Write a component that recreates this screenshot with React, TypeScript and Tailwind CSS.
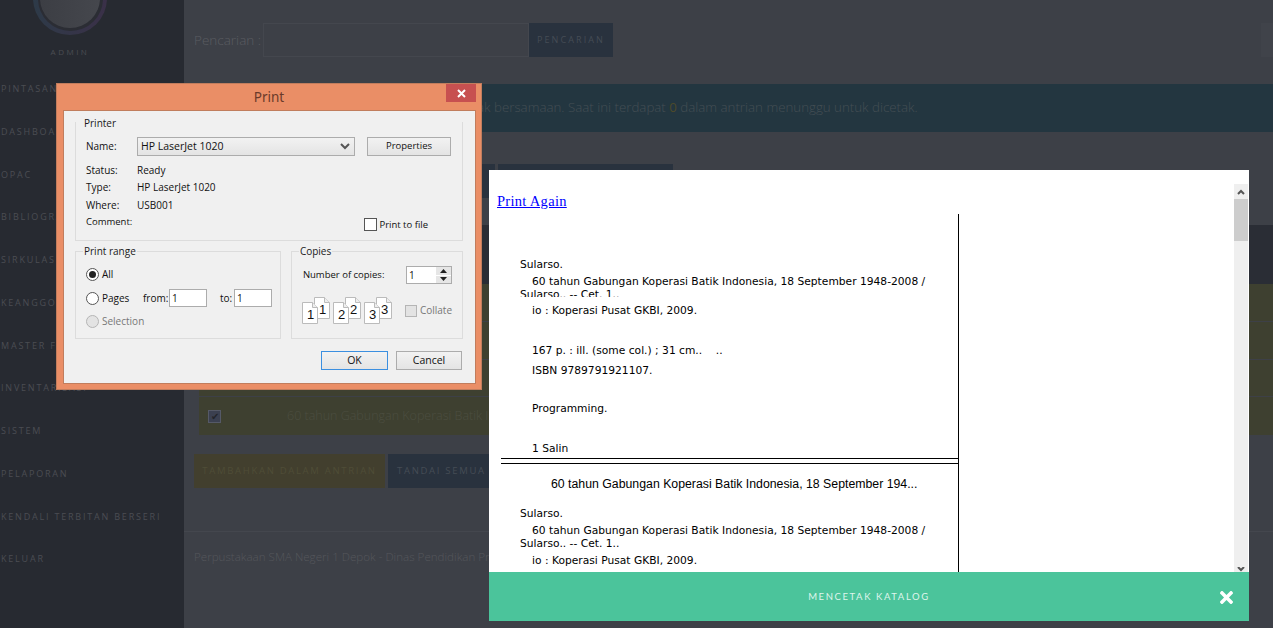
import React from "react";
import { FaTimes } from "react-icons/fa";

const menu = ["PINTASAN","DASHBOARD","OPAC","BIBLIOGRAFI","SIRKULASI","KEANGGOTAAN","MASTER FILE","INVENTARISASI","SISTEM","PELAPORAN","KENDALI TERBITAN BERSERI","KELUAR"];

function Sidebar() {
  return (
    <aside className="w-[184px] shrink-0 bg-[#272a31] flex flex-col items-stretch overflow-hidden">
      <div className="flex justify-center pr-[44px] -mt-[39px]">
        <div className="w-[74px] h-[74px] rounded-full bg-gradient-to-r from-[#2d3a48] to-[#3a3048] flex items-center justify-center">
          <div className="w-[65px] h-[65px] rounded-full bg-[#2b2d34] flex items-center justify-center">
            <div className="w-[60px] h-[60px] rounded-full bg-gradient-to-r from-[#3c3e44] to-[#45474d]" />
          </div>
        </div>
      </div>
      <div className="pr-[44px] mt-[12px] text-center text-[8px] leading-[10px] tracking-[2.5px] text-[#4b4d52]">ADMIN</div>
      <nav className="mt-[22px] flex flex-col pl-[1px]">
        {menu.map((m) => (
          <div key={m} className="h-[42.75px] leading-[20px] text-[9px] tracking-[1.8px] whitespace-nowrap text-[#4b4d53]">{m}</div>
        ))}
      </nav>
    </aside>
  );
}

function Main() {
  return (
    <main className="flex-1 min-w-0 bg-[#3d4047] flex flex-col overflow-hidden">
      <div className="flex items-center h-[34px] mt-[23px] pl-[10px]">
        <span className="w-[69px] text-[13.5px] font-light text-[#5a5c61] whitespace-nowrap">Pencarian :</span>
        <div className="w-[266px] h-full border border-[#44474e]" />
        <div className="w-[84px] h-full bg-[#29323e] text-[9px] tracking-[2.1px] text-[#454c55] flex items-center justify-center">PENCARIAN</div>
        <div className="ml-auto w-[12px] h-full bg-[#40434a]" />
      </div>
      <div className="mt-[27px] h-[48px] bg-[#233640] flex items-center pl-[275px] text-[13.3px] font-light text-[#434e54] whitespace-nowrap">
        <span>cetak bersamaan. Saat ini terdapat <b className="text-[#4d4a2a]">0</b> dalam antrian menunggu untuk dicetak.</span>
      </div>
      <div className="mt-[32px] h-[34px] flex pl-[10px] gap-[3px]">
        <div className="w-[301px] bg-[#29323e]" />
        <div className="w-[175px] bg-[#29323e]" />
      </div>
      <div className="mt-[27px] h-[59px] bg-[#2a2d35]" />
      <div className="ml-[15px] flex flex-col gap-px">
        <div className="h-[37px] bg-[#3e4030]" />
        <div className="h-[37px] bg-[#3e4030]" />
        <div className="h-[36px] bg-[#3e4030]" />
        <div className="h-[38px] bg-[#3e4030] flex items-center pl-[9px]">
          <div className="w-[13px] h-[13px] bg-[#3b4050] border border-[#555967] flex items-center justify-center text-[10px] text-[#23252b]">✔</div>
          <span className="ml-[66px] text-[12.5px] font-light text-[#4c4e40] whitespace-nowrap">60 tahun Gabungan Koperasi Batik Indonesia, 18 September 1948-2008</span>
        </div>
      </div>
      <div className="mt-[19px] h-[34px] flex pl-[10px] gap-[3px] text-[9.5px] tracking-[1.7px] items-stretch whitespace-nowrap">
        <div className="w-[191px] bg-[#423f2e] text-[#4f4d37] flex items-center justify-center">TAMBAHKAN DALAM ANTRIAN</div>
        <div className="w-[200px] bg-[#29323e] text-[#454c55] flex items-center pl-[9px]">TANDAI SEMUA</div>
      </div>
      <div className="mt-[43px] border-t border-[#44474e] pt-[16px] pl-[10px] text-[11.6px] font-light text-[#55575c] whitespace-nowrap">
        Perpustakaan SMA Negeri 1 Depok - Dinas Pendidikan Provinsi Jawa Barat
      </div>
    </main>
  );
}

function Group({ title, className, legend, children }: { title: string; className: string; legend: string; children: React.ReactNode }) {
  return (
    <fieldset className={`border border-[#dcdcdc] ${className}`}>
      <legend className={`px-[1px] text-[10px] leading-[12px] text-[#1a1a1a] ${legend}`}>{title}</legend>
      {children}
    </fieldset>
  );
}

function Btn({ children, className = "" }: { children: React.ReactNode; className?: string }) {
  return (
    <div className={`h-[19px] bg-gradient-to-b from-[#f2f2f2] to-[#e4e4e4] border flex items-center justify-center text-[10.5px] text-[#111] ${className}`}>{children}</div>
  );
}

function Radio({ on, off, label }: { on?: boolean; off?: boolean; label: string }) {
  return (
    <div className="flex items-center gap-[3px]">
      <div className={`w-[13px] h-[13px] rounded-full border flex items-center justify-center ${off ? "border-[#b5b5b5] bg-[#e3e3e3]" : "border-[#555] bg-white"}`}>
        {on && <div className="w-[7px] h-[7px] rounded-full bg-[#222]" />}
      </div>
      <span className={off ? "text-[#777]" : "text-[#111]"}>{label}</span>
    </div>
  );
}

function CopyPages({ n }: { n: number }) {
  const page = (x: number, y: number) => (
    <g>
      <path d={`M${x} ${y}h10l5 5v16h-15z`} fill="#fff" stroke="#bbb" />
      <path d={`M${x + 10} ${y}v5h5`} fill="#eee" stroke="#bbb" />
      <text x={x + 8} y={y + 16} fontSize="13" textAnchor="middle" fill="#111" fontFamily="Liberation Sans, sans-serif">{n}</text>
    </g>
  );
  return (
    <svg width="29" height="27" viewBox="0 0 29 27">
      {page(12.5, 0.5)}
      {page(0.5, 5.5)}
    </svg>
  );
}

function PrintDialog() {
  return (
    <section className="absolute left-[56px] top-[83px] w-[426px] h-[307px] bg-[#ea8e66] border border-[#c17d5d] flex flex-col font-['Open_Sans',sans-serif]">
      <div className="relative h-[26px] shrink-0 flex items-center justify-center text-[13.5px] text-[#6a3a2a] font-['Noto_Sans',sans-serif]">
        Print
        <div className="absolute right-[5px] top-0 w-[30px] h-[18px] bg-[#c75050] flex items-center justify-center text-white">
          <svg width="9" height="9" viewBox="0 0 9 9"><path d="M1 1l7 7M8 1l-7 7" stroke="#fff" strokeWidth="2" /></svg>
        </div>
      </div>
      <div className="mx-[5.5px] mb-[5px] flex-1 bg-[#f0f0f0] border border-[#c17d5d] px-[11.5px] pt-[6px] flex flex-col text-[10px] text-[#111]">
        <div className="h-[124px] w-[388px] border-x border-b border-[#dcdcdc] pl-[10px] pr-[11px] relative">
          <div className="absolute -left-px -top-px w-[calc(100%+2px)] h-[6px] bg-[#f0f0f0]" />
          <div className="relative -ml-[2px] text-[10px] leading-[12px] text-[#1a1a1a]">Printer</div>
          <div className="flex mt-[8px] items-center relative">
            <span className="w-[51px]">Name:</span>
            <div className="w-[218px] h-[19px] bg-gradient-to-b from-[#f2f2f2] to-[#e4e4e4] border border-[#acacac] flex items-center justify-between pl-[3px] pr-[4px] text-[10.5px]">
              HP LaserJet 1020
              <svg width="10" height="7" viewBox="0 0 10 7"><path d="M1 1l4 4 4-4" fill="none" stroke="#555" strokeWidth="2" /></svg>
            </div>
            <Btn className="ml-[12px] w-[84px] border-[#acacac] !text-[9.5px]">Properties</Btn>
          </div>
          <div className="mt-[5px] grid grid-cols-[51px_1fr] auto-rows-[17.5px] items-center leading-[12px]">
            <span>Status:</span><span>Ready</span>
            <span>Type:</span><span>HP LaserJet 1020</span>
            <span>Where:</span><span>USB001</span>
            <span className="text-[9.5px]">Comment:</span>
            <span className="flex items-center justify-end pr-[23px] pt-[5px] text-[9.5px]">
              <span className="w-[13px] h-[13px] bg-white border border-[#555] mr-[2px]" />Print to file
            </span>
          </div>
        </div>
        <div className="flex mt-[4px] gap-[10px]">
          <Group title="Print range" legend="-ml-[3px]" className="w-[207px] h-[94px] pl-[10px]">
            <div className="flex flex-col gap-[7px] mt-[10px]">
              <Radio on label="All" />
              <div className="flex items-center">
                <div className="w-[53px]"><Radio label="Pages" /></div>
                <span className="ml-[4px] w-[26px]">from:</span>
                <div className="w-[38px] h-[18px] bg-white border border-[#acacac] pl-[2px] leading-[16px]">1</div>
                <span className="ml-[13px] w-[14px]">to:</span>
                <div className="w-[38px] h-[18px] bg-white border border-[#acacac] pl-[2px] leading-[16px]">1</div>
              </div>
              <Radio off label="Selection" />
            </div>
          </Group>
          <Group title="Copies" legend="-ml-[4px]" className="w-[171px] h-[94px] pl-[11px] pr-[10px]">
            <div className="flex items-center justify-between mt-[9px]">
              <span className="text-[9.5px]">Number of copies:</span>
              <div className="w-[46px] h-[18px] bg-white border border-[#acacac] flex justify-between pl-[2px]">
                <span className="leading-[16px]">1</span>
                <div className="w-[15px] flex flex-col gap-px bg-white">
                  <div className="flex-1 bg-[#e6e6e6] flex items-center justify-center"><svg width="7" height="4" viewBox="0 0 7 4"><path d="M3.5 0l3.5 4h-7z" fill="#222" /></svg></div>
                  <div className="flex-1 bg-[#e6e6e6] flex items-center justify-center"><svg width="7" height="4" viewBox="0 0 7 4"><path d="M3.5 4l3.5-4h-7z" fill="#222" /></svg></div>
                </div>
              </div>
            </div>
            <div className="flex items-center mt-[13px] -ml-[1px]">
              <div className="flex gap-[2px]"><CopyPages n={1} /><CopyPages n={2} /><CopyPages n={3} /></div>
              <span className="ml-[12px] w-[12px] h-[12px] border border-[#b5b5b5] bg-[#e3e3e3]" />
              <span className="ml-[3px] text-[#777]">Collate</span>
            </div>
          </Group>
        </div>
        <div className="flex justify-end gap-[8px] mt-[12px] pr-[1px]">
          <Btn className="w-[67px] border-[#3b8fe0]">OK</Btn>
          <Btn className="w-[66px] border-[#acacac]">Cancel</Btn>
        </div>
      </div>
    </section>
  );
}

function Line({ h, pl = 31, clip, children }: { h: number; pl?: number; clip?: boolean; children: React.ReactNode }) {
  return (
    <div className={`whitespace-nowrap ${clip ? "overflow-hidden" : ""}`} style={{ height: h, paddingLeft: pl - 12 }}>{children}</div>
  );
}

function PrintModal() {
  return (
    <section className="absolute left-[489px] top-[170px] w-[760px] h-[451px] bg-white flex flex-col">
      <div className="flex-1 min-h-0 relative overflow-hidden pl-[8px]">
        <a className="block mt-[22px] h-[22px] w-fit font-['Liberation_Serif',serif] text-[14.5px] leading-[18px] tracking-[0.3px] text-[#0000ff] underline">Print Again</a>
        <div className="ml-[4px] w-[458px] border-r border-black font-['DejaVu_Sans',sans-serif] text-[10.7px] leading-[14px] text-black">
          <div className="h-[245px] border-b border-black pl-[19px] overflow-hidden">
            <div className="h-[44px]" />
            <Line h={17} pl={12}>Sularso.</Line>
            <Line h={13} pl={24}>60 tahun Gabungan Koperasi Batik Indonesia, 18 September 1948-2008 /</Line>
            <Line h={9} pl={12} clip>Sularso.. -- Cet. 1..</Line>
            <div className="h-[7px]" />
            <Line h={40} pl={24}>io : Koperasi Pusat GKBI, 2009.</Line>
            <Line h={20} pl={24}>167 p. : ill. (some col.) ; 31 cm..&nbsp;&nbsp;&nbsp; ..</Line>
            <Line h={38} pl={24}>ISBN 9789791921107.</Line>
            <Line h={40} pl={24}>Programming.</Line>
            <Line h={11} pl={24} clip>1 Salin</Line>
          </div>
          <div className="h-[4px] bg-white" />
          <div className="h-[120px] border-t border-black pl-[19px] overflow-hidden">
            <div className="h-[13px]" />
            <div className="h-[30px] pl-[31px] whitespace-nowrap font-['Liberation_Sans',sans-serif] text-[12.3px]">60 tahun Gabungan Koperasi Batik Indonesia, 18 September 194...</div>
            <Line h={17} pl={12}>Sularso.</Line>
            <Line h={13} pl={24}>60 tahun Gabungan Koperasi Batik Indonesia, 18 September 1948-2008 /</Line>
            <Line h={17} pl={12}>Sularso.. -- Cet. 1..</Line>
            <Line h={14} pl={24}>io : Koperasi Pusat GKBI, 2009.</Line>
          </div>
        </div>
        <div className="absolute right-px top-[14px] bottom-0 w-[14px] bg-[#efefef] flex flex-col justify-between">
          <div>
            <div className="h-[15px] flex items-center justify-center"><svg width="8" height="6" viewBox="0 0 8 6"><path d="M1 5l3-3 3 3" fill="none" stroke="#555" strokeWidth="2" /></svg></div>
            <div className="h-[42px] bg-[#cdcdcd]" />
          </div>
          <div className="h-[5px] flex items-start justify-center"><svg width="8" height="5" viewBox="0 0 8 5"><path d="M1 0l3 3 3-3" fill="none" stroke="#555" strokeWidth="2" /></svg></div>
        </div>
      </div>
      <div className="relative h-[49px] shrink-0 bg-[#4bc49b] flex items-center justify-center pt-px font-['Lato',sans-serif] text-[9.5px] tracking-[1.6px] text-[#dff5ec]">
        MENCETAK KATALOG
        <FaTimes className="absolute right-[13px] top-[16px] text-white text-[19px]" />
      </div>
    </section>
  );
}

export default function App() {
  return (
    <div className="relative w-[1273px] h-[628px] overflow-hidden flex font-['Open_Sans',sans-serif]">
      <Sidebar />
      <Main />
      <PrintDialog />
      <PrintModal />
    </div>
  );
}
